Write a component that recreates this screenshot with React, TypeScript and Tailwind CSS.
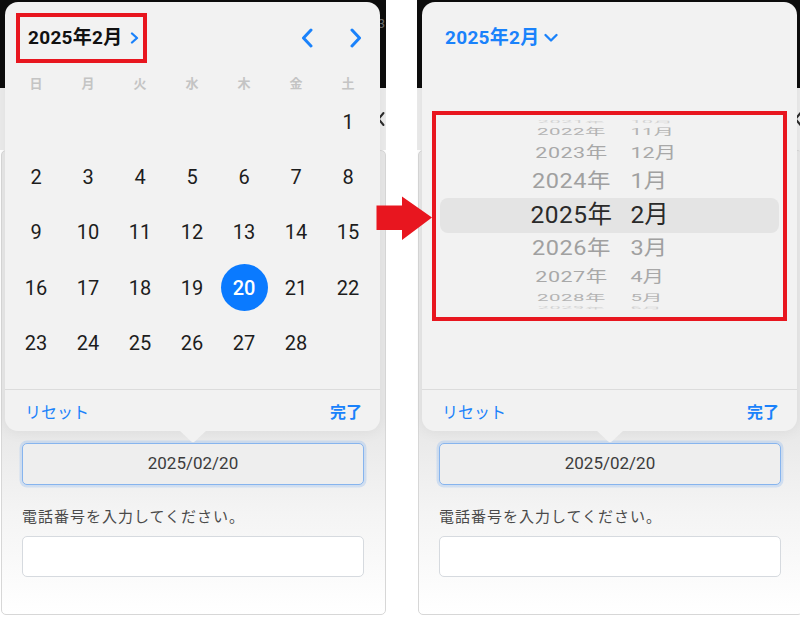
import React from "react";

type Mode = "calendar" | "wheel";

const WEEK = ["日", "月", "火", "水", "木", "金", "土"];

// February 2025 starts on a Saturday
const DAYS: (number | null)[] = [
  null, null, null, null, null, null,
  ...Array.from({ length: 28 }, (_, i) => i + 1),
];

type WheelRow = {
  year: string;
  month: string;
  cls: string;
  sy: number;
  dy: number;
  sel?: boolean;
};

const WHEEL: WheelRow[] = [
  { year: "2021年", month: "10月", cls: "h-[10px] text-[20px] text-[#d2d2d2]", sy: 0.14, dy: 0 },
  { year: "2022年", month: "11月", cls: "h-[15.6px] text-[20.5px] text-[#b4b4b4]", sy: 0.42, dy: -2.7 },
  { year: "2023年", month: "12月", cls: "h-[24.7px] text-[21.5px] text-[#a8a8a8]", sy: 0.72, dy: -1.8 },
  { year: "2024年", month: "1月", cls: "h-[30.9px] text-[23.5px] text-[#a0a0a0]", sy: 0.88, dy: -1.3 },
  { year: "2025年", month: "2月", cls: "h-[35px] text-[24.5px] text-[#2a2a2a]", sy: 1, dy: -0.5, sel: true },
  { year: "2026年", month: "3月", cls: "h-[29.9px] text-[23.5px] text-[#a0a0a0]", sy: 0.88, dy: 1 },
  { year: "2027年", month: "4月", cls: "h-[24.3px] text-[21.5px] text-[#a8a8a8]", sy: 0.72, dy: 1.7 },
  { year: "2028年", month: "5月", cls: "h-[15.7px] text-[20.5px] text-[#b4b4b4]", sy: 0.42, dy: 2.7 },
  { year: "2029年", month: "6月", cls: "h-[10px] text-[20px] text-[#d2d2d2]", sy: 0.14, dy: 0 },
];

function ChevronSmallRight() {
  return (
    <svg width="9" height="12" viewBox="0 0 9 12" fill="none">
      <path d="M2 1.5L7 6L2 10.5" stroke="#1a82fb" strokeWidth="2.3" strokeLinecap="round" strokeLinejoin="round" />
    </svg>
  );
}

function ChevronDown() {
  return (
    <svg width="14" height="10" viewBox="0 0 14 10" fill="none">
      <path d="M1.5 2L7 7.5L12.5 2" stroke="#1a82fb" strokeWidth="2.3" strokeLinecap="round" strokeLinejoin="round" />
    </svg>
  );
}

function NavLeft() {
  return (
    <svg width="12" height="20" viewBox="0 0 12 20" fill="none">
      <path d="M10 2L2.5 10L10 18" stroke="#1a82fb" strokeWidth="3" strokeLinecap="round" strokeLinejoin="round" />
    </svg>
  );
}

function NavRight() {
  return (
    <svg width="12" height="20" viewBox="0 0 12 20" fill="none">
      <path d="M2 2L9.5 10L2 18" stroke="#1a82fb" strokeWidth="3" strokeLinecap="round" strokeLinejoin="round" />
    </svg>
  );
}

function BackGlyph() {
  return (
    <svg width="8" height="16" viewBox="0 0 8 16" fill="none">
      <path d="M6.5 2L1.5 8L6.5 14" stroke="#2b2b2b" strokeWidth="2" strokeLinecap="round" strokeLinejoin="round" />
    </svg>
  );
}

function CalendarBody() {
  return (
    <>
      <div className="grid h-[20px] grid-cols-[repeat(7,52px)] items-center px-[5px] text-center text-[13px] font-semibold text-[#c4c4c4]">
        {WEEK.map((w) => (
          <span key={w}>{w}</span>
        ))}
      </div>
      <div className="grid grid-cols-[repeat(7,52px)] auto-rows-[55.3px] px-[5px]">
        {DAYS.map((d, i) => (
          <div key={i} className="flex items-center justify-center">
            {d === 20 ? (
              <span className="flex h-[47px] w-[47px] items-center justify-center rounded-full bg-[#0a7aff] text-[20px] font-medium text-white">
                20
              </span>
            ) : d ? (
              <span className="text-[20px] text-[#1d1d1d]">{d}</span>
            ) : null}
          </div>
        ))}
      </div>
    </>
  );
}

function WheelBody() {
  return (
    <div className="mt-[43px] flex h-[196px] flex-col overflow-hidden">
      {WHEEL.map((r) => (
        <div
          key={r.year}
          className={`mx-[18px] flex shrink-0 items-center leading-none ${r.cls} ${
            r.sel ? "rounded-[8px] bg-[#e4e4e4]" : ""
          }`}
        >
          <span className="w-[72.5px] shrink-0" />
          <span
            className="w-[118px] shrink-0 text-center tracking-[0.5px]"
            style={{ transform: `translateY(${r.dy}px) scaleY(${r.sy})` }}
          >
            {r.year}
          </span>
          <span
            className="origin-left"
            style={{ transform: `translateY(${r.dy}px) scaleY(${r.sy})` }}
          >
            {r.month}
          </span>
        </div>
      ))}
    </div>
  );
}

function Popover({ mode }: { mode: Mode }) {
  return (
    <div className="absolute left-[5px] top-[2px] flex h-[429px] w-[375px] flex-col rounded-[13px] bg-[#f2f2f2] shadow-[0_2px_14px_rgba(0,0,0,0.05)]">
      <div className="flex h-[72px] shrink-0 items-center pl-[23px] pr-[18px]">
        {mode === "calendar" ? (
          <>
            <span className="text-[19px] font-bold tracking-[0.3px] text-[#111111]">2025年2月</span>
            <span className="ml-[7px] flex">
              <ChevronSmallRight />
            </span>
            <div className="ml-auto flex items-center gap-[37px]">
              <NavLeft />
              <NavRight />
            </div>
          </>
        ) : (
          <>
            <span className="text-[19px] font-bold tracking-[0.3px] text-[#1a82fb]">2025年2月</span>
            <span className="ml-[4px] flex">
              <ChevronDown />
            </span>
          </>
        )}
      </div>

      {mode === "calendar" ? <CalendarBody /> : <WheelBody />}

      <div className="flex-1" />
      <div className="flex h-[42px] shrink-0 items-center justify-between border-t border-[#dcdcdc] px-[20px] pr-[18px] pt-[5px] text-[16px] text-[#1a82fb]">
        <span>リセット</span>
        <span className="font-bold">完了</span>
      </div>

      {/* pointer toward the date field */}
      <svg
        className="absolute left-[174px] top-[428px]"
        width="28"
        height="13"
        viewBox="0 0 28 13"
      >
        <path d="M0 0 L12.2 11.6 Q14 13 15.8 11.6 L28 0 Z" fill="#f2f2f2" />
      </svg>
    </div>
  );
}

function Screen({ mode, badge }: { mode: Mode; badge?: boolean }) {
  return (
    <div className="relative h-[628px] w-[386px] shrink-0 overflow-hidden bg-white">
      <div className="flex flex-col">
        <div className="flex h-[88px] justify-end bg-[#0d0d0d] pr-[1px] pt-[17px]">
          {badge ? <span className="text-[13px] leading-none text-[#6e6e6e]">3</span> : null}
        </div>
        <div className="flex h-[62px] items-center justify-end bg-[#ebebeb] pr-[1px]">
          <BackGlyph />
        </div>
        <div className="ml-[1px] h-[465px] w-[385px] rounded-[5px] border border-[#d7d7d7] bg-[linear-gradient(to_bottom,#e7e7e7_58%,#f4f4f4_78%,#ffffff_100%)] px-[20px] pt-[292px]">
          <div className="flex h-[42px] w-[342px] items-center justify-center rounded-[5px] border-[1.5px] border-[#86b4ee] bg-[#eeeeee] text-[17px] text-[#3c3c3c] shadow-[0_0_0_2.5px_rgba(150,190,240,0.35)]">
            2025/02/20
          </div>
          <div className="mt-[22px] h-[20px] text-[15px] leading-[20px] tracking-[1px] text-[#4a4a4a]">
            電話番号を入力してください。
          </div>
          <div className="mt-[9px] h-[41px] w-[342px] rounded-[5px] border-[1.5px] border-[#d6dadf] bg-white" />
        </div>
      </div>
      <Popover mode={mode} />
    </div>
  );
}

export default function App() {
  return (
    <div className="relative h-[628px] w-[800px] overflow-hidden bg-white [font-family:Roboto,'Noto_Sans_CJK_JP',sans-serif]">
      <div className="flex gap-[31px]">
        <Screen mode="calendar" badge />
        <Screen mode="wheel" />
      </div>

      {/* highlight frames */}
      <div className="absolute left-[16px] top-[13px] h-[50px] w-[131px] border-[4px] border-[#e8161f]" />
      <div className="absolute left-[432px] top-[111px] h-[210px] w-[355px] border-[4px] border-[#e8161f]" />

      {/* transition arrow */}
      <svg className="absolute left-[376px] top-[196px]" width="57" height="45" viewBox="0 0 57 45">
        <path d="M0.5 9.5 H26 V0.5 L56 21.5 L26 44 V34 H0.5 Z" fill="#e8161f" />
      </svg>
    </div>
  );
}
